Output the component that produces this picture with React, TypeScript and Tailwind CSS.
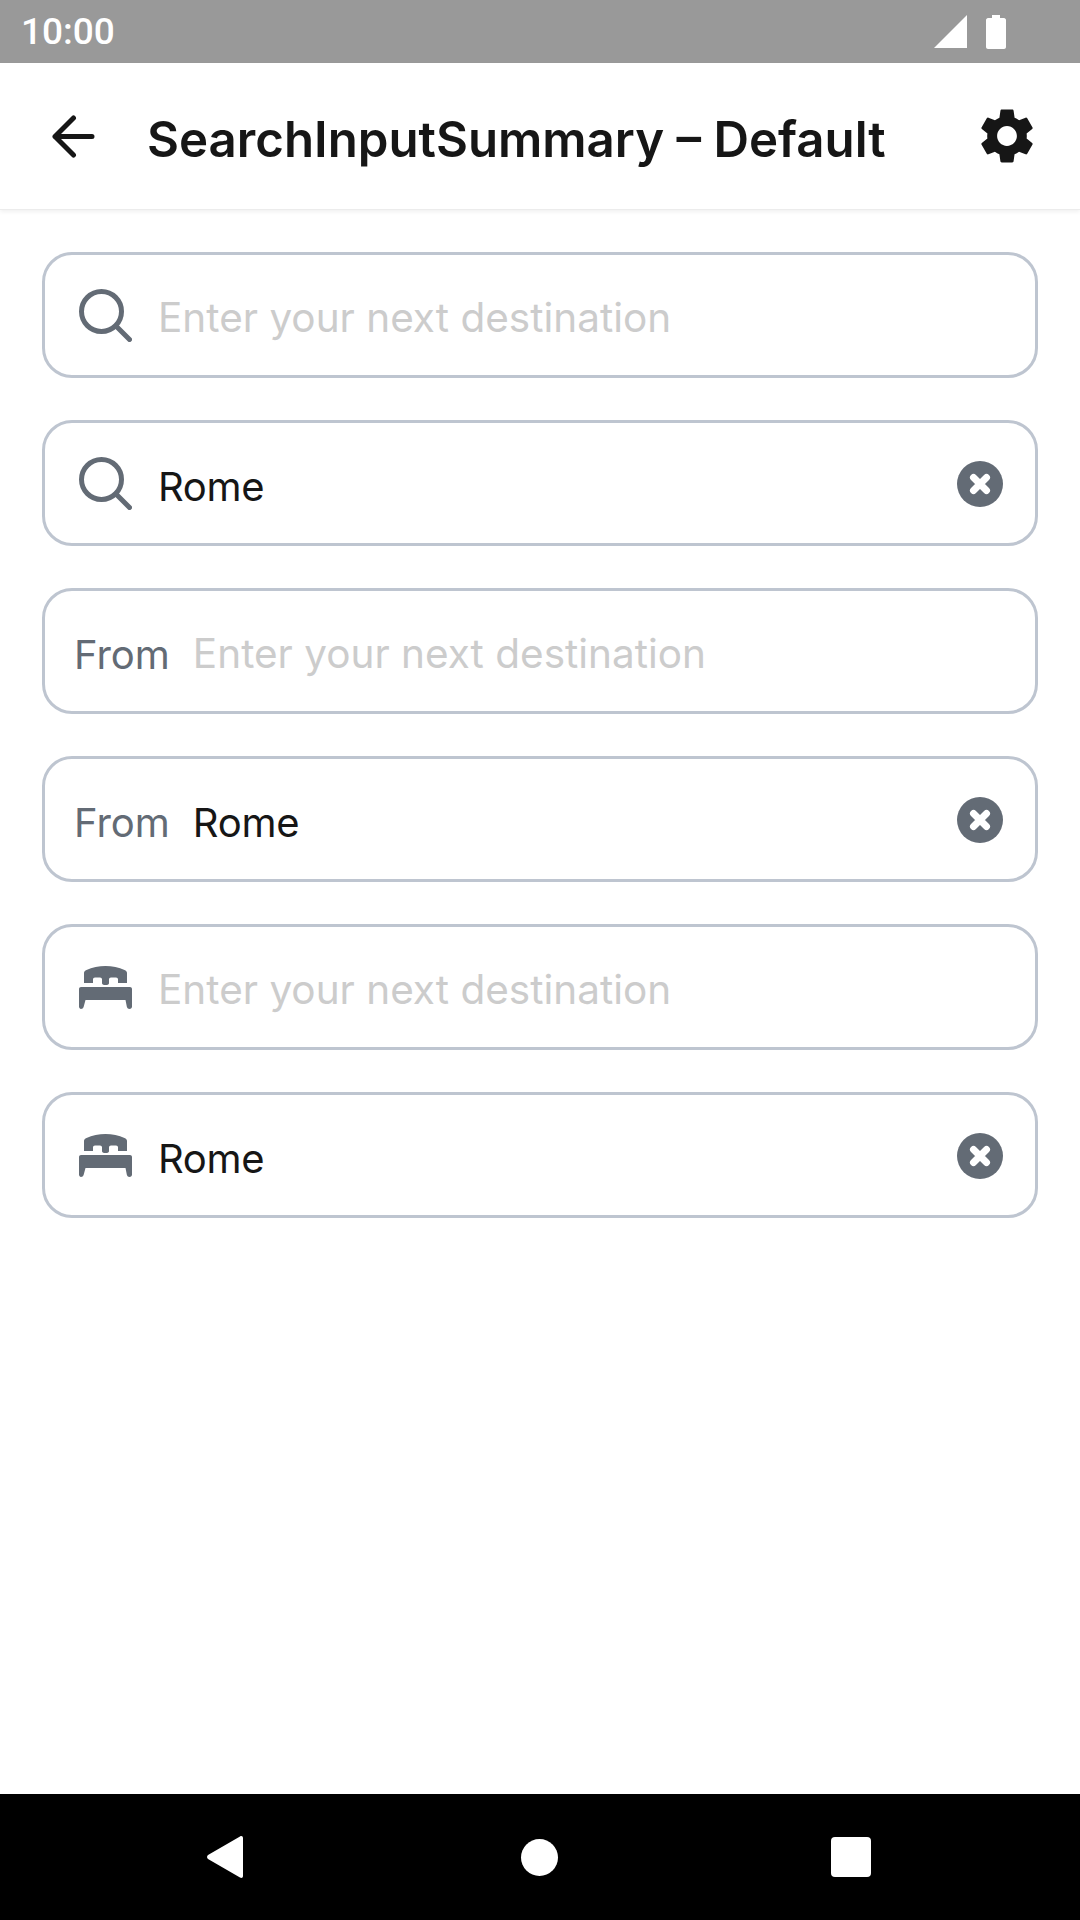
import type { ReactNode } from 'react'

const FONT = "font-['Inter','Liberation_Sans',sans-serif]"

function SearchIcon() {
  return (
    <svg width="53" height="53" viewBox="0 0 53 53" fill="none" stroke="#636b75" strokeWidth="5" strokeLinecap="round">
      <circle cx="22.5" cy="22.5" r="20" />
      <path d="M37 37l13.5 13.5" />
    </svg>
  )
}

function BedIcon() {
  return (
    <svg width="53" height="43" viewBox="0 0 53 43" fill="#636b75">
      <path d="M5 17V7c0-1.500 1-2.500 2.500-3C13 1.500 20 0 26.500 0S40 1.500 45.500 4c1.500.5 2.500 1.500 2.500 3v10h-9v-3.500c0-1.200-.8-2-2-2h-5c-1.200 0-2 .8-2 2V17a3.500 2 0 0 1-7 0v-3.500c0-1.200-.8-2-2-2h-5c-1.200 0-2 .8-2 2V17z" />
      <path d="M2 21h49c1.100 0 2 .9 2 2v17.500c0 1.500-1 2.500-2.500 2.500-1.300 0-2.200-.8-2.600-2L46.500 34h-40L4.600 41c-.4 1.200-1.300 2-2.600 2-1 0-2-1-2-2.500V23c0-1.100.9-2 2-2z" />
    </svg>
  )
}

function ClearIcon() {
  return (
    <svg className="mt-[1px]" width="46" height="46" viewBox="0 0 46 46">
      <circle cx="23" cy="23" r="23" fill="#636b75" />
      <path d="M16.500 16.500l13 13M29.500 16.500l-13 13" stroke="#fff" strokeWidth="7" strokeLinecap="round" />
    </svg>
  )
}

function Field({ icon, label, value }: { icon?: ReactNode; label?: string; value?: string }) {
  return (
    <div className="flex h-[126px] items-center rounded-[30px] border-[3px] border-[#bec5d0] pr-[32px]">
      {icon && <div className="ml-[34px] flex w-[53px] shrink-0 items-center justify-center">{icon}</div>}
      {label && <span className="ml-[29px] mt-[7px] text-[40px] leading-none text-[#636b75]">{label}</span>}
      <span
        className={`${icon ? 'ml-[26px]' : 'ml-[23px]'} mt-[7px] flex-1 leading-none ${value ? 'text-[40px] tracking-[-0.3px] text-[#161616]' : 'text-[40.5px] text-[#cccccc]'}`}
      >
        {value ?? 'Enter your next destination'}
      </span>
      {value && <ClearIcon />}
    </div>
  )
}

export default function App() {
  return (
    <div className={`flex h-[1920px] w-[1080px] flex-col bg-white ${FONT}`}>
      {/* status bar */}
      <div className="flex h-[63px] items-center justify-between bg-[#999999] pl-[21px] pr-[74px]">
        <span className="font-['Roboto',sans-serif] text-[37px] font-medium leading-none text-white">10:00</span>
        <div className="flex items-center gap-[19px]">
          <svg width="33" height="33" viewBox="0 0 33 33" fill="#fff">
            <path d="M33 0v33H0z" />
          </svg>
          <svg width="20" height="34" viewBox="0 0 20 34" fill="#fff">
            <path d="M6 0h8v3h4c1 0 2 1 2 2v27c0 1-1 2-2 2H2c-1 0-2-1-2-2V5c0-1 1-2 2-2h4z" />
          </svg>
        </div>
      </div>

      {/* toolbar */}
      <header className="flex h-[147px] items-center border-b border-[#ececec] pl-[52px] pr-[40px] shadow-[0_2px_4px_rgba(0,0,0,0.06)]">
        <svg width="43" height="43" viewBox="0 0 43 43" fill="none" stroke="#161616" strokeWidth="5" strokeLinecap="round" strokeLinejoin="round">
          <path d="M40 21.500H3M21.500 3l-18.500 18.500 18.500 18.500" />
        </svg>
        <h1 className="ml-[52px] mt-[7px] flex-1 text-[49.200px] font-semibold leading-none text-[#161616]">SearchInputSummary – Default</h1>
        <svg width="66" height="66" viewBox="0 0 24 24" fill="#161616">
          <path d="M19.140 12.940c.04-.300.060-.610.060-.940 0-.320-.020-.640-.070-.940l2.030-1.580c.180-.140.230-.410.120-.610l-1.920-3.320c-.120-.220-.370-.290-.590-.220l-2.390.960c-.500-.380-1.030-.700-1.620-.940l-.360-2.540c-.040-.240-.240-.410-.480-.410h-3.840c-.240 0-.430.170-.470.410l-.360 2.540c-.590.240-1.130.570-1.620.940l-2.390-.960c-.220-.080-.470 0-.590.220L2.740 8.870c-.120.210-.080.470.120.610l2.030 1.580c-.050.300-.090.630-.090.940s.020.640.070.940l-2.030 1.580c-.180.140-.230.410-.120.610l1.920 3.320c.120.220.370.290.590.220l2.390-.960c.500.380 1.030.700 1.620.940l.360 2.540c.050.240.240.410.480.410h3.840c.240 0 .440-.170.470-.410l.360-2.540c.590-.240 1.130-.560 1.620-.940l2.390.960c.220.080.470 0 .590-.220l1.920-3.320c.120-.220.070-.470-.120-.610l-2.010-1.580zM12 15.600c-1.980 0-3.600-1.620-3.600-3.600s1.620-3.600 3.600-3.600 3.600 1.620 3.600 3.600-1.620 3.600-3.600 3.600z" />
        </svg>
      </header>

      {/* fields */}
      <main className="flex flex-1 flex-col gap-[42px] px-[42px] pt-[42px]">
        <Field icon={<SearchIcon />} />
        <Field icon={<SearchIcon />} value="Rome" />
        <Field label="From" />
        <Field label="From" value="Rome" />
        <Field icon={<BedIcon />} />
        <Field icon={<BedIcon />} value="Rome" />
      </main>

      {/* nav bar */}
      <nav className="flex h-[126px] items-center bg-black">
        <svg className="ml-[207px]" width="36" height="42" viewBox="0 0 36 42" fill="#fff">
          <path d="M33 0.500c1.500-1 3-.3 3 1.500v38c0 1.800-1.500 2.500-3 1.500L1 23c-1.300-1-1.300-3 0-4z" />
        </svg>
        <div className="ml-[278px] h-[37px] w-[37px] rounded-full bg-white" />
        <div className="ml-[273px] h-[40px] w-[40px] rounded-[4px] bg-white" />
      </nav>
    </div>
  )
}
